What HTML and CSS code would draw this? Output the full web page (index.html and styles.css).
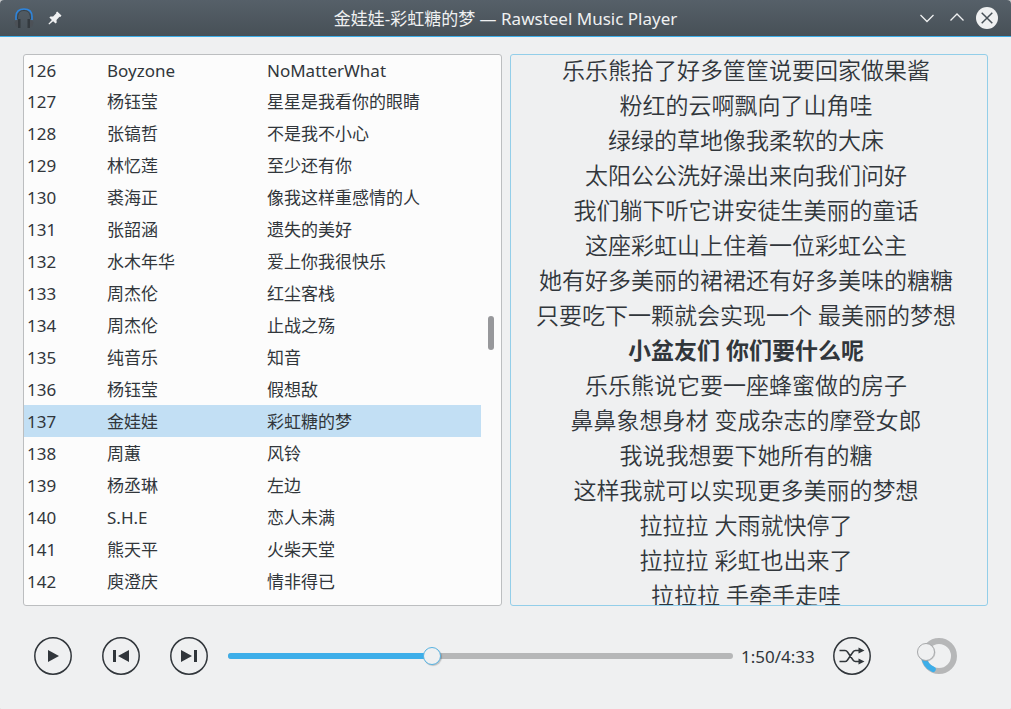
FILE: index.html
```html
<!DOCTYPE html>
<html lang="zh-CN">
<head>
<meta charset="utf-8">
<title>Rawsteel Music Player</title>
<link rel="stylesheet" href="styles.css">
</head>
<body>
<div class="window">
  <header class="titlebar">
    <div class="title-left">
      <svg class="app-icon" width="20" height="22" viewBox="0 0 20 22">
        <path d="M2 13V9.500C2 4.500 5 2 10 2S18 4.500 18 9.500V13" fill="none" stroke="#2d85de" stroke-width="1.600"/>
        <path d="M3.500 12C3.500 6 6 3.500 10 3.500s6.500 2.500 6.500 8.500" fill="none" stroke="#34414c" stroke-width="1"/>
        <path d="M4 12.500v8l-2.500-1.500-1-4zM16 12.500v8l2.500-1.500 1-4z" fill="#4c5157"/>
        <path d="M4 12h2.500v9H4zM13.500 12H16v9h-2.500z" fill="#343a3f"/>
      </svg>
      <svg class="pin-icon" width="14" height="14" viewBox="0 0 14 14">
        <path d="M9.200.5l4.300 4-1.200 1.400-.8-.2-3 3.200.2 2.600-1.100 1.100-2.500-2.400L1.200 13.500l-.8-.7 3.500-3.900L1.400 6.500l1-1.100 2.700.1 3.200-3.200-.2-.8z" fill="#eff0f1"/>
      </svg>
    </div>
    <h1 class="title">金娃娃-彩虹糖的梦 — Rawsteel Music Player</h1>
    <div class="title-right">
      <svg width="84" height="22" viewBox="0 0 84 22" fill="none" stroke="#eff0f1" stroke-width="1.300">
        <path d="M3.500 8l6.500 6.500L16.500 8M33.500 13.500L40 7l6.500 6.500"/>
        <circle cx="70" cy="11" r="11" fill="#eff0f1" stroke="none"/>
        <path d="M64.700 5.700l10.600 10.600M75.300 5.700L64.700 16.300" stroke="#475057" stroke-width="1.500"/>
      </svg>
    </div>
  </header>
  <main class="panels">
    <section class="playlist">
      <div class="rows">
        <div class="row first"><span>126</span><span>Boyzone</span><span>NoMatterWhat</span></div>
        <div class="row"><span>127</span><span>杨钰莹</span><span>星星是我看你的眼睛</span></div>
        <div class="row"><span>128</span><span>张镐哲</span><span>不是我不小心</span></div>
        <div class="row"><span>129</span><span>林忆莲</span><span>至少还有你</span></div>
        <div class="row"><span>130</span><span>裘海正</span><span>像我这样重感情的人</span></div>
        <div class="row"><span>131</span><span>张韶涵</span><span>遗失的美好</span></div>
        <div class="row"><span>132</span><span>水木年华</span><span>爱上你我很快乐</span></div>
        <div class="row"><span>133</span><span>周杰伦</span><span>红尘客栈</span></div>
        <div class="row"><span>134</span><span>周杰伦</span><span>止战之殇</span></div>
        <div class="row"><span>135</span><span>纯音乐</span><span>知音</span></div>
        <div class="row"><span>136</span><span>杨钰莹</span><span>假想敌</span></div>
        <div class="row selected"><span>137</span><span>金娃娃</span><span>彩虹糖的梦</span></div>
        <div class="row"><span>138</span><span>周蕙</span><span>风铃</span></div>
        <div class="row"><span>139</span><span>杨丞琳</span><span>左边</span></div>
        <div class="row"><span>140</span><span>S.H.E</span><span>恋人未满</span></div>
        <div class="row"><span>141</span><span>熊天平</span><span>火柴天堂</span></div>
        <div class="row"><span>142</span><span>庾澄庆</span><span>情非得已</span></div>
      </div>
      <div class="scrollbar"><div class="thumb"></div></div>
    </section>
    <section class="lyrics">
      <p class="top">乐乐熊拾了好多筐筐说要回家做果酱</p>
      <p>粉红的云啊飘向了山角哇</p>
      <p>绿绿的草地像我柔软的大床</p>
      <p>太阳公公洗好澡出来向我们问好</p>
      <p>我们躺下听它讲安徒生美丽的童话</p>
      <p>这座彩虹山上住着一位彩虹公主</p>
      <p>她有好多美丽的裙裙还有好多美味的糖糖</p>
      <p>只要吃下一颗就会实现一个 最美丽的梦想</p>
      <p class="current">小盆友们 你们要什么呢</p>
      <p>乐乐熊说它要一座蜂蜜做的房子</p>
      <p>鼻鼻象想身材 变成杂志的摩登女郎</p>
      <p>我说我想要下她所有的糖</p>
      <p>这样我就可以实现更多美丽的梦想</p>
      <p>拉拉拉 大雨就快停了</p>
      <p>拉拉拉 彩虹也出来了</p>
      <p>拉拉拉 手牵手走哇</p>
    </section>
  </main>
  <footer class="controls">
    <div class="buttons">
      <svg class="btn" viewBox="0 0 38 38"><circle cx="19" cy="19" r="18.200"/><path d="M14 13l11 6-11 6z"/></svg>
      <svg class="btn" viewBox="0 0 38 38"><circle cx="19" cy="19" r="18.200"/><path d="M11 13h3v12h-3zM27 13v12l-11-6z"/></svg>
      <svg class="btn" viewBox="0 0 38 38"><circle cx="19" cy="19" r="18.200"/><path d="M11 13l11 6-11 6zM24 13h3v12h-3z"/></svg>
    </div>
    <div class="seek"><div class="played"></div><div class="handle"></div></div>
    <span class="time">1:50/4:33</span>
    <svg class="btn shuffle" viewBox="0 0 38 38"><circle cx="19" cy="19" r="18.200"/>
      <path class="wire" d="M6.500 13.500h5.500q1.500 0 2.500 1.500l5.500 8q1 1.500 2.500 1.500H27M6.500 24.500h5.500q1.500 0 2.500-1.500l5.500-8q1-1.500 2.500-1.500H27"/>
      <path d="M25.500 10.500l6 3-6 3zM25.500 21.500l6 3-6 3z"/></svg>
    <svg class="dial" width="42" height="40" viewBox="0 0 42 40">
      <circle cx="22" cy="20" r="15" fill="none" stroke="#b6b7b8" stroke-width="6"/>
      <path d="M7 20A15 15 0 0 0 16 33.300" fill="none" stroke="#3daee9" stroke-width="5.600" stroke-linecap="round"/>
      <circle cx="9.500" cy="16.500" r="9" fill="#888" opacity=".35"/>
      <circle cx="9" cy="16" r="8.500" fill="#eff0f1" stroke="#a6a8aa"/>
    </svg>
  </footer>
</div>
</body>
</html>
```
FILE: styles.css
```css
* { box-sizing: border-box; }

body {
  margin: 0;
  background: #c8cacb;
  color: #31363b;
  font-family: "Noto Sans", "Noto Sans CJK SC", sans-serif;
  font-size: 17px;
}

.window {
  width: 1011px;
  height: 709px;
  display: flex;
  flex-direction: column;
  background: #eff0f1;
  border-radius: 4px 4px 1px 1px;
  overflow: hidden;
}

.titlebar {
  height: 37px;
  flex: none;
  display: grid;
  grid-template-columns: 120px 1fr 120px;
  background: linear-gradient(#566069, #475057);
  border-bottom: 1px solid #3daee9;
}

.title-left {
  display: flex;
  align-items: flex-start;
  padding: 7px 0 0 14px;
  gap: 14px;
}

.pin-icon { margin-top: 4px; }

.title {
  margin: 0;
  font-size: 17px;
  font-weight: 400;
  line-height: 37px;
  color: #eff0f1;
  text-align: center;
  white-space: nowrap;
}

.title-right { padding: 7px 0 0 26px; }

.panels {
  height: 552px;
  flex: none;
  display: grid;
  grid-template-columns: 479px 478px;
  gap: 8px;
  margin: 17px 0 0 23px;
}

.playlist {
  display: flex;
  border: 1px solid #bcbec0;
  border-radius: 3px;
  background: #fcfcfc;
  overflow: hidden;
}

.rows { width: 457px; }

.row {
  height: 32px;
  display: grid;
  grid-template-columns: 80px 160px 1fr;
  padding-left: 3px;
  line-height: 34px;
  white-space: nowrap;
}

.row.first { height: 30px; line-height: 32px; }
.row.selected { background: #c2dff4; }

.scrollbar { padding: 261px 0 0 7px; }

.thumb {
  width: 6px;
  height: 34px;
  border-radius: 3px;
  background: #97989b;
}

.lyrics {
  border: 1px solid #93cee9;
  border-radius: 3px;
  overflow: hidden;
  text-align: center;
  font-family: "Noto Sans", "Noto Sans CJK SC DemiLight", "Noto Sans CJK SC", sans-serif;
  font-size: 23px;
  font-weight: 350;
  line-height: 35px;
}

.lyrics p {
  margin: 0;
  height: 35px;
  padding-right: 6px;
  white-space: nowrap;
}

.lyrics .top { height: 33px; line-height: 31px; }

.lyrics .current {
  font-family: "Noto Sans", "Noto Sans CJK SC", sans-serif;
  font-weight: 700;
}

.controls {
  display: flex;
  align-items: center;
  height: 100px;
  padding-left: 34px;
}

.buttons { display: flex; gap: 30px; }

.btn {
  width: 38px;
  height: 38px;
  flex: none;
  fill: #31363b;
}

.btn circle, .btn .wire {
  fill: none;
  stroke: #31363b;
  stroke-width: 1.5;
}

.seek {
  position: relative;
  width: 505px;
  height: 6px;
  margin-left: 20px;
  border-radius: 3px;
  background: #b6b7b8;
}

.played {
  width: 204px;
  height: 6px;
  border-radius: 3px;
  background: #3daee9;
}

.handle {
  position: absolute;
  left: 195px;
  top: -6px;
  width: 18px;
  height: 18px;
  border: 1px solid #56b2e2;
  border-radius: 50%;
  background: #eff0f1;
  box-shadow: 1px 1px 1px rgba(0, 0, 0, .2);
}

.time { width: 75px; margin-left: 8px; line-height: 24px; padding-top: 2px; white-space: nowrap; }
.shuffle { margin-left: 17px; }
.dial { margin-left: 46px; }
```
